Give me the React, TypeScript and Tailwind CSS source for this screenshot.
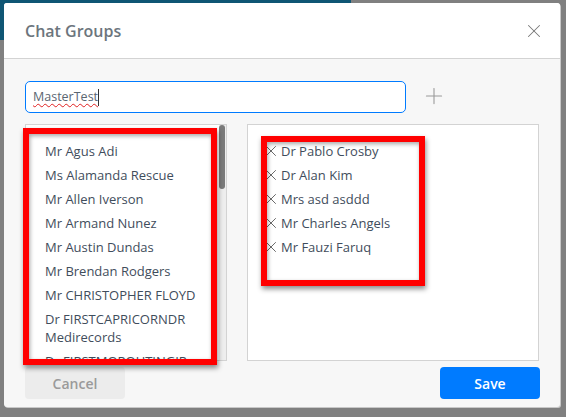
import { X, Plus } from "lucide-react";

const leftItems = [
  "Mr Agus Adi",
  "Ms Alamanda Rescue",
  "Mr Allen Iverson",
  "Mr Armand Nunez",
  "Mr Austin Dundas",
  "Mr Brendan Rodgers",
  "Mr CHRISTOPHER FLOYD",
  "Dr FIRSTCAPRICORNDR Medirecords",
  "Dr FIRSTMOROUTINGIR",
];

const rightItems = [
  "Dr Pablo Crosby",
  "Dr Alan Kim",
  "Mrs asd asddd",
  "Mr Charles Angels",
  "Mr Fauzi Faruq",
];

export default function App() {
  return (
    <div className="relative w-[566px] h-[417px] overflow-hidden bg-[#808080] font-['Open_Sans',sans-serif] text-[13px] text-[#3f4d5c]">
      {/* page behind the backdrop */}
      <div className="absolute left-0 top-0 w-[351px] h-[40px] bg-[#0f5674]" />

      {/* modal */}
      <div className="absolute left-[4px] top-[3px] w-[556px] h-[404px] flex flex-col rounded-[3px] bg-[#f7f7f7] shadow-[1px_1px_0_#c8c8c8] overflow-hidden">
        <div className="h-[56px] shrink-0 flex items-center justify-between pl-[21px] pr-[15px] bg-white border-b border-[#d3d3d3]">
          <h2 className="text-[16px] font-semibold text-[#6c757d]">Chat Groups</h2>
          <X className="w-[22px] h-[22px] text-[#777]" strokeWidth={1.1} />
        </div>

        <div className="flex flex-col pl-[21px] pr-[20px] pt-[22px]">
          <div className="flex items-center">
            <div className="w-[381px] h-[32px] flex items-center pl-[7px] pt-px bg-white border border-[#007bff] rounded-[5px] text-[12.5px]">
              <span className="underline decoration-wavy decoration-[#e02020] decoration-1 underline-offset-2 text-[#5a6672]">
                MasterTest
              </span>
              <span className="w-px h-[17px] bg-[#333]" />
            </div>
            <Plus className="ml-[15px] mb-[2px] w-[26px] h-[26px] text-[#999]" strokeWidth={1} />
          </div>

          <div className="flex mt-[11px] h-[237px]">
            <div className="relative w-[202px] bg-white border border-[#d3d3d3] overflow-hidden">
              <ul className="pl-[19px] pr-[20px] pt-[17px]">
                {leftItems.map((name) => (
                  <li key={name} className="mb-[6px] leading-[18px]">
                    {name}
                  </li>
                ))}
              </ul>
              <div className="absolute right-0 top-0 bottom-0 w-[7px] bg-[#eeeeee]" />
              <div className="absolute right-[1px] top-0 w-[6px] h-[64px] rounded-[3px] bg-[#7b7b7b]" />
            </div>

            <div className="ml-[20px] w-[292px] bg-white border border-[#d3d3d3]">
              <ul className="pl-[14px] pt-[17px]">
                {rightItems.map((name) => (
                  <li key={name} className="flex items-center mb-[6px] leading-[18px]">
                    <X className="w-[18px] h-[18px] mr-px text-[#666]" strokeWidth={1.3} />
                    {name}
                  </li>
                ))}
              </ul>
            </div>
          </div>

          <div className="flex items-center justify-between mt-[6px]">
            <button className="w-[100px] h-[32px] pt-px rounded-[4px] bg-[#ececec] text-[14px] font-semibold text-[#9a9a9a]">
              Cancel
            </button>
            <button className="w-[100px] h-[32px] pt-px rounded-[4px] bg-[#007bff] text-[14px] font-semibold text-white">
              Save
            </button>
          </div>
        </div>
      </div>

      {/* red annotation boxes */}
      <div className="absolute left-[23px] top-[128px] w-[194px] h-[237px] border-[6px] border-[#ff0000] shadow-[1px_3px_5px_rgba(0,0,0,0.45),inset_1px_2px_4px_rgba(0,0,0,0.35)]" />
      <div className="absolute left-[261px] top-[136px] w-[164px] h-[150px] border-[6px] border-[#ff0000] shadow-[1px_3px_5px_rgba(0,0,0,0.45),inset_1px_2px_4px_rgba(0,0,0,0.35)]" />
    </div>
  );
}
